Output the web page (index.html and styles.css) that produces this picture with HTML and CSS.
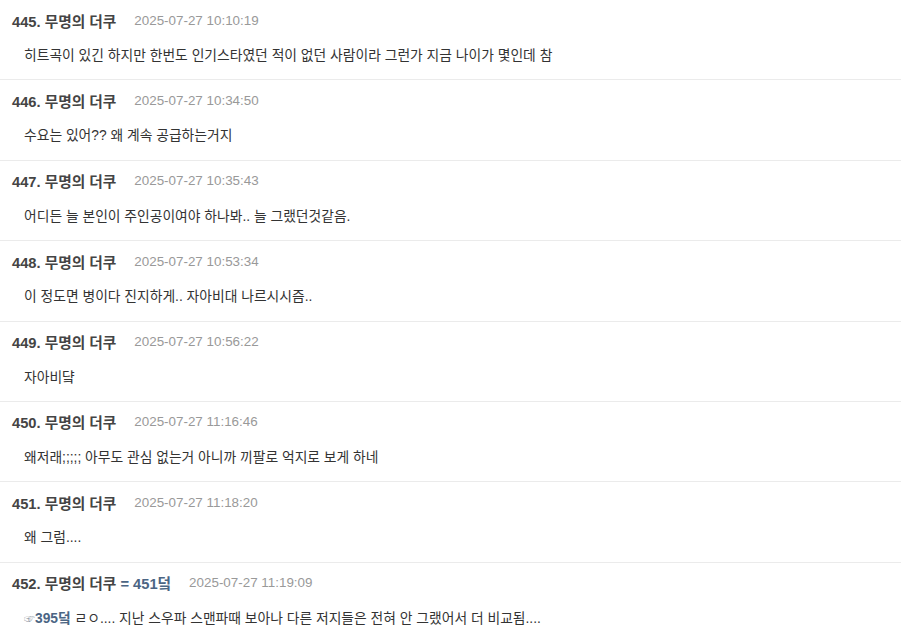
FILE: index.html
```html
<!DOCTYPE html>
<html lang="ko">
<head>
    <meta charset="UTF-8">
    <title>댓글</title>
    <link rel="stylesheet" href="styles.css">
</head>
<body>
    <div class="replies">
        <div class="reply">
            <div class="reply-head"><span class="name">445. 무명의 더쿠</span><span class="date">2025-07-27 10:10:19</span></div>
            <p class="reply-text">히트곡이 있긴 하지만 한번도 인기스타였던 적이 없던 사람이라 그런가 지금 나이가 몇인데 참</p>
        </div>
        <div class="reply">
            <div class="reply-head"><span class="name">446. 무명의 더쿠</span><span class="date">2025-07-27 10:34:50</span></div>
            <p class="reply-text">수요는 있어?? 왜 계속 공급하는거지</p>
        </div>
        <div class="reply">
            <div class="reply-head"><span class="name">447. 무명의 더쿠</span><span class="date">2025-07-27 10:35:43</span></div>
            <p class="reply-text">어디든 늘 본인이 주인공이여야 하나봐.. 늘 그랬던것같음.</p>
        </div>
        <div class="reply">
            <div class="reply-head"><span class="name">448. 무명의 더쿠</span><span class="date">2025-07-27 10:53:34</span></div>
            <p class="reply-text">이 정도면 병이다 진지하게.. 자아비대 나르시시즘..</p>
        </div>
        <div class="reply">
            <div class="reply-head"><span class="name">449. 무명의 더쿠</span><span class="date">2025-07-27 10:56:22</span></div>
            <p class="reply-text">자아비댴</p>
        </div>
        <div class="reply">
            <div class="reply-head"><span class="name">450. 무명의 더쿠</span><span class="date">2025-07-27 11:16:46</span></div>
            <p class="reply-text">왜저래;;;;; 아무도 관심 없는거 아니까 끼팔로 억지로 보게 하네</p>
        </div>
        <div class="reply">
            <div class="reply-head"><span class="name">451. 무명의 더쿠</span><span class="date">2025-07-27 11:18:20</span></div>
            <p class="reply-text">왜 그럼....</p>
        </div>
        <div class="reply">
            <div class="reply-head"><span class="name">452. 무명의 더쿠 <span class="ref">= 451덬</span></span><span class="date">2025-07-27 11:19:09</span></div>
            <p class="reply-text"><span class="point">☞</span><span class="ref">395덬</span> ㄹㅇ.... 지난 스우파 스맨파때 보아나 다른 저지들은 전혀 안 그랬어서 더 비교됨....</p>
        </div>
    </div>
</body>
</html>
```

FILE: styles.css
```css
body {
    margin: 0;
    padding: 0;
    background: #fff;
    font-family: "Liberation Sans", "Noto Sans CJK KR", sans-serif;
    color: #333;
}
.reply {
    padding: 10px 12px 13.4px;
    border-bottom: 1px solid #ebebeb;
}
.reply-head {
    display: flex;
    align-items: center;
    gap: 18px;
    height: 20px;
}
.name {
    font-size: 14.7px;
    font-weight: bold;
    color: #444;
}
.date {
    font-size: 13.4px;
    color: #999;
}
.reply-text {
    margin: 16px 0 0;
    padding-left: 12px;
    font-size: 13.8px;
    line-height: 20px;
    color: #333;
}
.ref {
    color: #4b6584;
    font-weight: bold;
}
.point {
    color: #9aa3ad;
    font-size: 11px;
}
```
